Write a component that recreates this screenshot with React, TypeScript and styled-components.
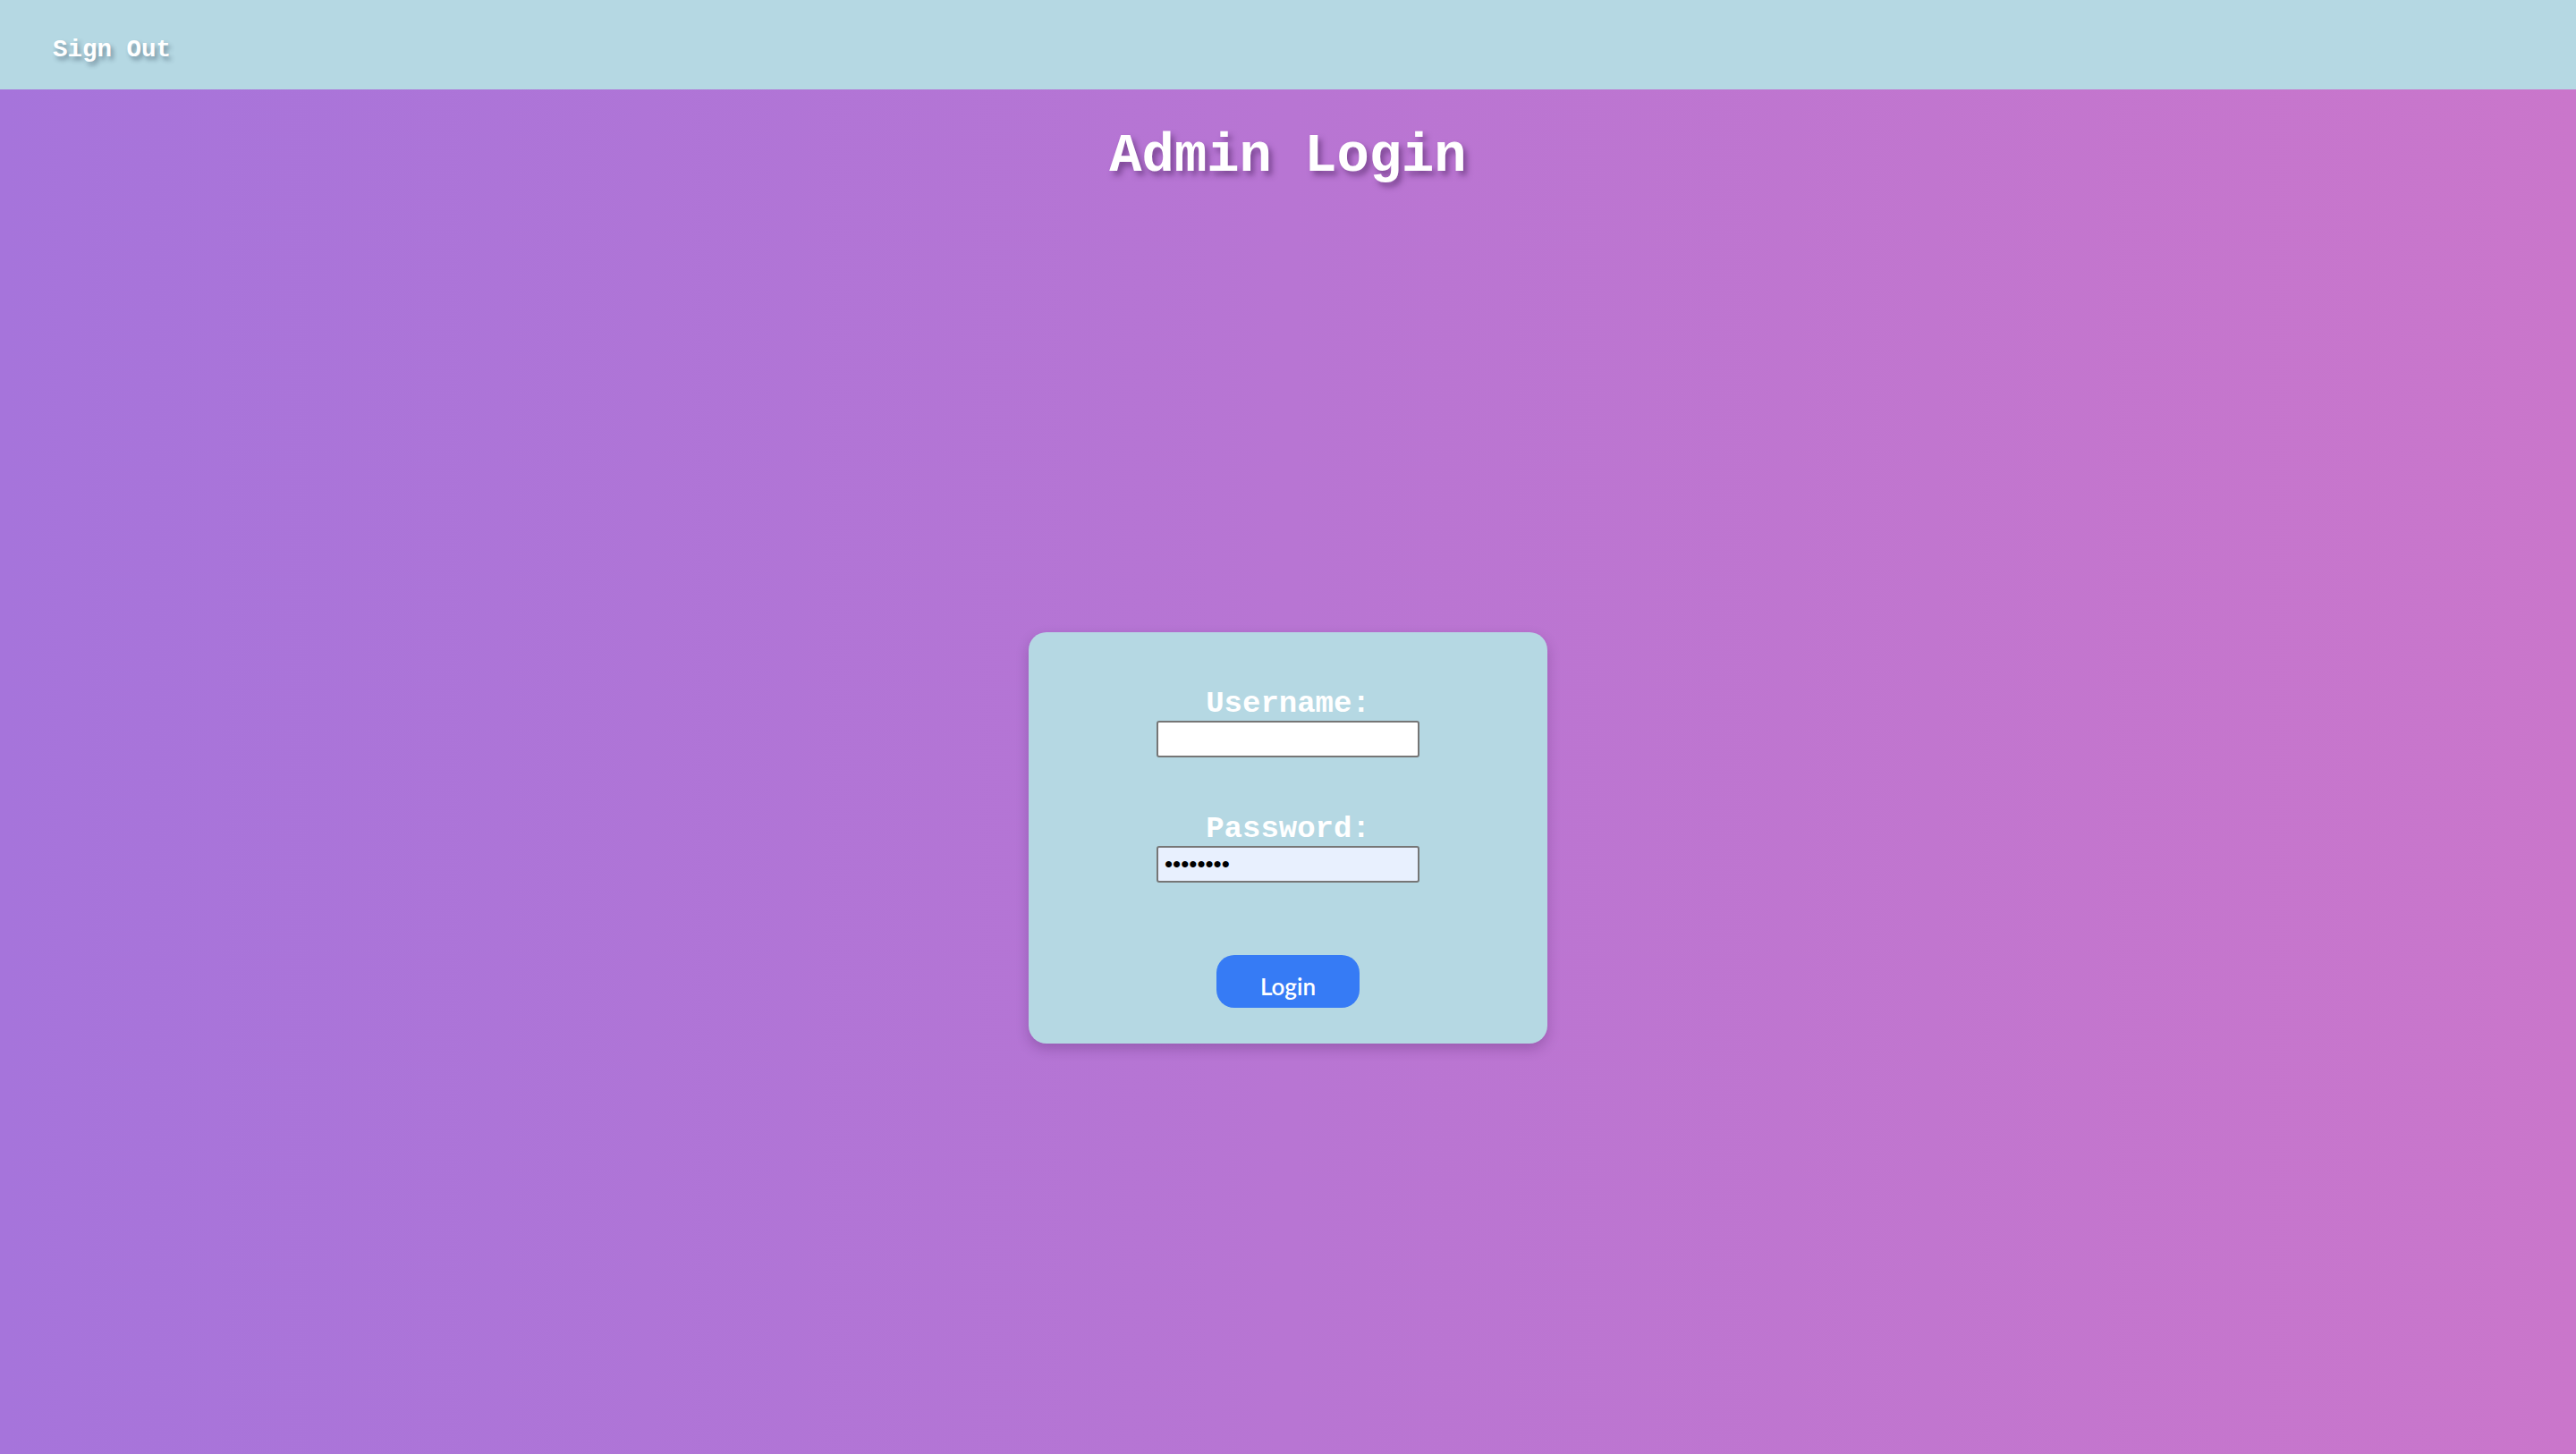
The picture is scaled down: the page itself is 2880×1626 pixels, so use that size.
import React from "react";
import styled, { createGlobalStyle } from "styled-components";

const GlobalStyle = createGlobalStyle`
  html, body {
    margin: 0;
    padding: 0;
  }
  body {
    font-family: "Liberation Sans", Arial, sans-serif;
  }
  * {
    box-sizing: border-box;
  }
`;

const mono = `"Courier New", Courier, "Nimbus Mono PS", FreeMono, "Liberation Mono", monospace`;

const Page = styled.div`
  min-height: 100vh;
  display: flex;
  flex-direction: column;
  background: linear-gradient(to right, #a674db, #ca76cb);
`;

const Header = styled.header`
  height: 100px;
  flex-shrink: 0;
  display: flex;
  align-items: center;
  padding: 12px 0 0 59px;
  background: #b5d8e3;
`;

const SignOut = styled.button`
  border: none;
  background: transparent;
  padding: 0;
  cursor: pointer;
  font-family: ${mono};
  font-weight: bold;
  font-size: 27.5px;
  line-height: 32px;
  color: #ffffff;
  text-shadow: 3px 4px 5px rgba(40, 60, 80, 0.45);
`;

const Main = styled.main`
  display: flex;
  flex-direction: column;
  align-items: center;
`;

const Title = styled.h1`
  margin: 39px 0 0;
  font-family: ${mono};
  font-weight: bold;
  font-size: 60.5px;
  line-height: 72px;
  color: #ffffff;
  text-shadow: 4px 5px 6px rgba(70, 30, 90, 0.5);
`;

const Card = styled.form`
  margin-top: 496px;
  width: 580px;
  padding: 61px 0 40px;
  display: flex;
  flex-direction: column;
  align-items: center;
  background: #b5d8e3;
  border-radius: 20px;
  box-shadow: 0 6px 14px rgba(60, 20, 80, 0.25);
`;

const Field = styled.div<{ $gapBelow: number }>`
  display: flex;
  flex-direction: column;
  align-items: center;
  margin-bottom: ${(p) => p.$gapBelow}px;
`;

const Label = styled.label`
  font-family: ${mono};
  font-weight: bold;
  font-size: 34px;
  line-height: 38px;
  color: #ffffff;
`;

const Input = styled.input<{ $filled?: boolean }>`
  width: 294px;
  height: 41px;
  padding: 0 7px;
  border: 2px solid #767676;
  border-radius: 3px;
  background: ${(p) => (p.$filled ? "#e8f0fe" : "#ffffff")};
  font-family: "Liberation Sans", Arial, sans-serif;
  font-size: 26px;
  color: #000;
  outline: none;
`;

const LoginButton = styled.button`
  width: 160px;
  height: 59px;
  border: none;
  border-radius: 20px;
  background: #367bf5;
  color: #ffffff;
  font-family: Lato, "Open Sans", sans-serif;
  font-weight: 600;
  font-size: 26px;
  padding-top: 11px;
  cursor: pointer;
`;

export default function App() {
  return (
    <>
      <GlobalStyle />
      <Page>
        <Header>
          <SignOut type="button">Sign Out</SignOut>
        </Header>
        <Main>
          <Title>Admin Login</Title>
          <Card onSubmit={(e) => e.preventDefault()}>
            <Field $gapBelow={61}>
              <Label htmlFor="username">Username:</Label>
              <Input id="username" type="text" />
            </Field>
            <Field $gapBelow={81}>
              <Label htmlFor="password">Password:</Label>
              <Input id="password" type="password" defaultValue="password" $filled />
            </Field>
            <LoginButton type="submit">Login</LoginButton>
          </Card>
        </Main>
      </Page>
    </>
  );
}
